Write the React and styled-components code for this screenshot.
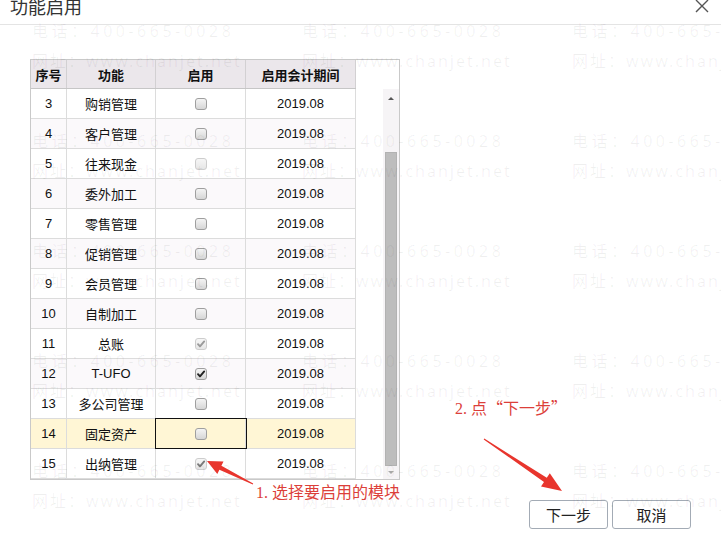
import React from "react";
import styled, { createGlobalStyle } from "styled-components";

const GlobalStyle = createGlobalStyle`
  html, body { margin: 0; padding: 0; background: #fff; }
  body {
    font-family: "Liberation Sans", "Noto Sans CJK SC", sans-serif;
    width: 721px; height: 555px; overflow: hidden;
  }
`;

const Page = styled.div`
  position: relative;
  width: 721px;
  height: 555px;
  overflow: hidden;
  background: #fff;
`;

const TitleBar = styled.div`
  height: 24px;
  border-bottom: 1px solid #e4e4e4;
  display: flex;
  align-items: flex-start;
  padding: 0 12px 0 10px;
  overflow: hidden;
`;

const Title = styled.div`
  font-family: "Noto Sans CJK SC", sans-serif;
  font-size: 18px;
  line-height: 18px;
  margin-top: -3px;
  color: #333;
`;

const CloseBtn = styled.div`
  margin-left: auto;
  width: 14px;
  height: 13px;
  display: flex;
`;

const Body = styled.div`
  padding: 34px 0 0 30px;
`;

const Grid = styled.div`
  width: 370px;
  height: 421px;
  box-sizing: border-box;
  border: 1px solid #c9c9c9;
  display: flex;
  background: #fff;
`;

const Table = styled.div`
  width: 325px;
  display: flex;
  flex-direction: column;
`;

const HeaderRow = styled.div`
  display: flex;
  height: 29px;
  box-sizing: border-box;
  background: #ebe7eb;
  border-bottom: 1px solid #c6c6c6;
`;

const Row = styled.div`
  display: flex;
  height: 30px;
  box-sizing: border-box;
  border-bottom: 1px solid #dcdcdc;
  background: ${(p) => (p.$hl ? "#fff6d5" : p.$alt ? "#fbf9fb" : "#fff")};
`;

const Cell = styled.div`
  width: ${(p) => p.$w}px;
  box-sizing: border-box;
  border-right: 1px solid ${(p) => (p.$head ? "#d2d0d2" : "#dcdcdc")};
  display: flex;
  align-items: center;
  justify-content: center;
  font-size: 13px;
  color: #111;
  font-weight: ${(p) => (p.$head ? 700 : 400)};
  outline: ${(p) => (p.$focus ? "1px solid #111" : "none")};
  position: relative;
`;

const ScrollBar = styled.div`
  width: 16px;
  margin: 29px 0 0 auto;
  background: #f6f4f6;
  display: flex;
  flex-direction: column;
  align-items: center;
`;

const ArrowBox = styled.div`
  height: ${(p) => p.$h}px;
  flex: ${(p) => (p.$grow ? 1 : "none")};
  display: flex;
  align-items: center;
  justify-content: center;
`;

const Tri = styled.div`
  width: 0;
  height: 0;
  border-left: 3px solid transparent;
  border-right: 3px solid transparent;
  ${(p) =>
    p.$down
      ? `border-top: 3px solid #a8a8a8;`
      : `border-bottom: 3px solid #555;`}
`;

const Thumb = styled.div`
  margin-top: 45px;
  width: 12px;
  height: 314px;
  box-sizing: border-box;
  background: #bdbdbd;
  border: 1px solid #b2b2b2;
`;

const Check = styled.div`
  width: 12px;
  height: 12px;
  box-sizing: border-box;
  border-radius: 3px;
  border: 1px solid ${(p) => (p.$disabled ? "#cdcdcd" : "#9f9f9f")};
  background: ${(p) =>
    p.$disabled
      ? "linear-gradient(#f6f6f6, #e6e6e6)"
      : "linear-gradient(#f4f4f4, #d6d6d6)"};
  display: flex;
  align-items: center;
  justify-content: center;
`;

const Footer = styled.div`
  display: flex;
  justify-content: flex-end;
  gap: 4px;
  padding-right: 30px;
  margin-top: 20px;
`;

const Button = styled.button`
  width: 79px;
  height: 29px;
  box-sizing: border-box;
  border: 1px solid #a3abb5;
  border-radius: 3px;
  background: #fff;
  font-family: "Noto Sans CJK SC", sans-serif;
  font-size: 15px;
  color: #222;
  padding: 0;
`;

const Watermark = styled.div`
  position: absolute;
  inset: 0;
  pointer-events: none;
  display: grid;
  grid-template-columns: repeat(3, 270px);
  grid-auto-rows: 110px;
  padding: 16px 0 0 32px;
  z-index: 2;
`;

const WmCell = styled.div`
  display: flex;
  flex-direction: column;
  white-space: nowrap;
`;

const WmLine = styled.div`
  font-family: "Noto Sans", "Noto Sans CJK SC", sans-serif;
  font-size: 16px;
  line-height: 30px;
  letter-spacing: ${(p) => p.$ls}px;
  color: rgba(0, 0, 0, 0.06);
`;

const Annotations = styled.svg`
  position: absolute;
  left: 0;
  top: 0;
  pointer-events: none;
  z-index: 3;
`;

const Note = styled.div`
  position: absolute;
  left: ${(p) => p.$x}px;
  top: ${(p) => p.$y}px;
  font-family: "Liberation Serif", "Noto Sans CJK SC", serif;
  font-size: 16px;
  line-height: 20px;
  color: #dc3f3a;
  white-space: nowrap;
  z-index: 3;
`;

const Quote = styled.span`
  font-family: "Noto Sans CJK SC", sans-serif;
  display: inline-block;
  width: 16px;
  text-align: ${(p) => (p.$open ? "right" : "left")};
`;

const COLS = [36, 89, 90, 110];

const rows = [
  { n: 3, name: "购销管理", state: "off" },
  { n: 4, name: "客户管理", state: "off" },
  { n: 5, name: "往来现金", state: "disabled" },
  { n: 6, name: "委外加工", state: "off" },
  { n: 7, name: "零售管理", state: "off" },
  { n: 8, name: "促销管理", state: "off" },
  { n: 9, name: "会员管理", state: "off" },
  { n: 10, name: "自制加工", state: "off" },
  { n: 11, name: "总账", state: "checkedDisabled" },
  { n: 12, name: "T-UFO", state: "checked" },
  { n: 13, name: "多公司管理", state: "off" },
  { n: 14, name: "固定资产", state: "off", hl: true },
  { n: 15, name: "出纳管理", state: "checkedDisabled2" },
];

function CheckBox({ state }) {
  const disabled = state === "disabled" || state.startsWith("checkedDisabled");
  const checked = state.startsWith("checked");
  const color =
    state === "checked" ? "#222" : state === "checkedDisabled2" ? "#7a7a7a" : "#9a9a9a";
  return (
    <Check $disabled={disabled}>
      {checked && (
        <svg width="10" height="10" viewBox="0 0 10 10">
          <path
            d="M2 5.2 L4 7.4 L8.2 2.4"
            fill="none"
            stroke={color}
            strokeWidth="1.9"
            strokeLinecap="round"
            strokeLinejoin="round"
          />
        </svg>
      )}
    </Check>
  );
}

export default function App() {
  const wm = Array.from({ length: 15 });
  return (
    <Page>
      <GlobalStyle />
      <TitleBar>
        <Title>功能启用</Title>
        <CloseBtn>
          <svg width="14" height="13" viewBox="0 0 14 13">
            <path d="M1 0 L13 12 M13 0 L1 12" stroke="#555" strokeWidth="1.4" />
          </svg>
        </CloseBtn>
      </TitleBar>
      <Body>
        <Grid>
          <Table>
            <HeaderRow>
              <Cell $w={COLS[0]} $head>序号</Cell>
              <Cell $w={COLS[1]} $head>功能</Cell>
              <Cell $w={COLS[2]} $head>启用</Cell>
              <Cell $w={COLS[3]} $head>启用会计期间</Cell>
            </HeaderRow>
            {rows.map((r, i) => (
              <Row key={r.n} $alt={i % 2 === 1} $hl={r.hl}>
                <Cell $w={COLS[0]}>{r.n}</Cell>
                <Cell $w={COLS[1]}>{r.name}</Cell>
                <Cell $w={COLS[2]} $focus={r.hl}>
                  <CheckBox state={r.state} />
                </Cell>
                <Cell $w={COLS[3]}>2019.08</Cell>
              </Row>
            ))}
          </Table>
          <ScrollBar>
            <ArrowBox $h={18}>
              <Tri />
            </ArrowBox>
            <Thumb />
            <ArrowBox $grow>
              <Tri $down />
            </ArrowBox>
          </ScrollBar>
        </Grid>
        <Footer>
          <Button>下一步</Button>
          <Button>取消</Button>
        </Footer>
      </Body>

      <Watermark>
        {wm.map((_, i) => (
          <WmCell key={i}>
            <WmLine $ls={3.5}>电话：400-665-0028</WmLine>
            <WmLine $ls={2}>网址：www.chanjet.net</WmLine>
          </WmCell>
        ))}
      </Watermark>

      <Annotations width="721" height="555" viewBox="0 0 721 555">
        <polygon
          points="207,461 223.5,461.4 221.4,465.7 253.2,483.6 252.8,484.4 219.4,469.7 217.3,474"
          fill="#e8352d"
        />
        <polygon
          points="562,491 541,486.6 544,482 483.7,439.4 484.3,438.6 546.8,477.8 549.8,473.2"
          fill="#e8352d"
        />
      </Annotations>
      <Note $x={256} $y={483}>1. 选择要启用的模块</Note>
      <Note $x={455} $y={397}>
        2. 点<Quote $open>“</Quote>下一步<Quote>”</Quote>
      </Note>
    </Page>
  );
}
